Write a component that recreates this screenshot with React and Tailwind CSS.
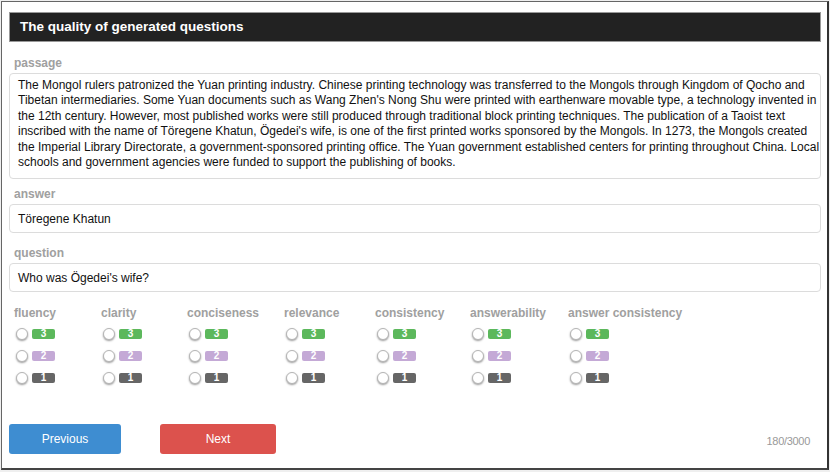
import React from 'react';

// passage laid out line by line to keep the reference wrapping
const passageLines = [
  'The Mongol rulers patronized the Yuan printing industry. Chinese printing technology was transferred to the Mongols through Kingdom of Qocho and',
  "Tibetan intermediaries. Some Yuan documents such as Wang Zhen's Nong Shu were printed with earthenware movable type, a technology invented in",
  'the 12th century. However, most published works were still produced through traditional block printing techniques. The publication of a Taoist text',
  "inscribed with the name of Töregene Khatun, Ögedei's wife, is one of the first printed works sponsored by the Mongols. In 1273, the Mongols created",
  'the Imperial Library Directorate, a government-sponsored printing office. The Yuan government established centers for printing throughout China. Local',
  'schools and government agencies were funded to support the publishing of books.',
];

const metrics = [
  { name: 'fluency', w: 'w-[87px]' },
  { name: 'clarity', w: 'w-[86px]' },
  { name: 'conciseness', w: 'w-[97px]' },
  { name: 'relevance', w: 'w-[91px]' },
  { name: 'consistency', w: 'w-[95px]' },
  { name: 'answerability', w: 'w-[98px]' },
  { name: 'answer consistency', w: 'w-[140px]' },
];

const scores = [
  { n: 3, cls: 'bg-[#5cb85c]' },
  { n: 2, cls: 'bg-[#c4a9d6]' },
  { n: 1, cls: 'bg-[#666666]' },
];

const Label = ({ children }) => (
  <div className="pl-[5px] text-[12px] font-bold text-[#a0a0a0] leading-[14px]">{children}</div>
);

export default function App() {
  return (
    <div className="w-[830px] h-[472px] bg-[#efefef] pl-[1px] pt-[1px]" style={{ fontFamily: '"Liberation Sans", Arial, sans-serif' }}>
      <div className="w-[828px] h-[469px] border border-[#666] border-r-[#333] border-r-2 border-b-2 border-b-[#444] bg-white pl-[7px] pr-[6px] pt-[10px]">
        {/* header */}
        <div className="h-[30px] border border-[#999] bg-[#222] flex items-center pl-[10px]">
          <h1 className="text-[13.5px] font-bold text-white">The quality of generated questions</h1>
        </div>

        {/* passage */}
        <div className="mt-[14px]">
          <Label>passage</Label>
          <div className="mt-[3px] h-[106px] rounded-[4px] border border-[#dcdcdc] bg-white pl-[8px] pt-[4px] text-[12px] leading-[15.4px] text-[#111]">
            {passageLines.map((l, i) => (
              <div key={i} className="whitespace-nowrap">{l}</div>
            ))}
          </div>
        </div>

        {/* answer */}
        <div className="mt-[8px]">
          <Label>answer</Label>
          <div className="mt-[3px] h-[29px] flex items-center rounded-[4px] border border-[#dcdcdc] bg-white px-[8px] text-[12px] text-[#111]">
            Töregene Khatun
          </div>
        </div>

        {/* question */}
        <div className="mt-[13px]">
          <Label>question</Label>
          <div className="mt-[3px] h-[29px] flex items-center rounded-[4px] border border-[#dcdcdc] bg-white px-[8px] text-[12px] text-[#111]">
            Who was Ögedei's wife?
          </div>
        </div>

        {/* ratings */}
        <div className="mt-[14px] flex pl-[5px]">
          {metrics.map((m) => (
            <div key={m.name} className={m.w}>
              <div className="text-[12px] font-bold text-[#a0a0a0] leading-[14px] whitespace-nowrap">{m.name}</div>
              <div className="mt-[8px] flex flex-col gap-[10px]">
                {scores.map((s) => (
                  <div key={s.n} className="flex items-center gap-[4px] h-[12px]">
                    <div className="ml-[2px] w-[12px] h-[12px] rounded-full border border-[#b5b5b5] bg-white shadow-[0px_1px_2px_rgba(0,0,0,0.4)]" />
                    <span className={`w-[23px] h-[10px] rounded-[2px] ${s.cls} text-white text-[10px] font-bold leading-[10px] text-center`}>
                      {s.n}
                    </span>
                  </div>
                ))}
              </div>
            </div>
          ))}
        </div>

        {/* footer */}
        <div className="mt-[40px] flex items-end">
          <button className="w-[112px] h-[30px] rounded-[3px] bg-[#3e8dd1] text-white text-[12px]">Previous</button>
          <button className="ml-[39px] w-[116px] h-[30px] rounded-[3px] bg-[#dc524d] text-white text-[12px]">Next</button>
          <div className="ml-auto mr-[11px] mb-[5px] text-[11px] tracking-[-0.3px] text-[#999]">180/3000</div>
        </div>
      </div>
    </div>
  );
}
